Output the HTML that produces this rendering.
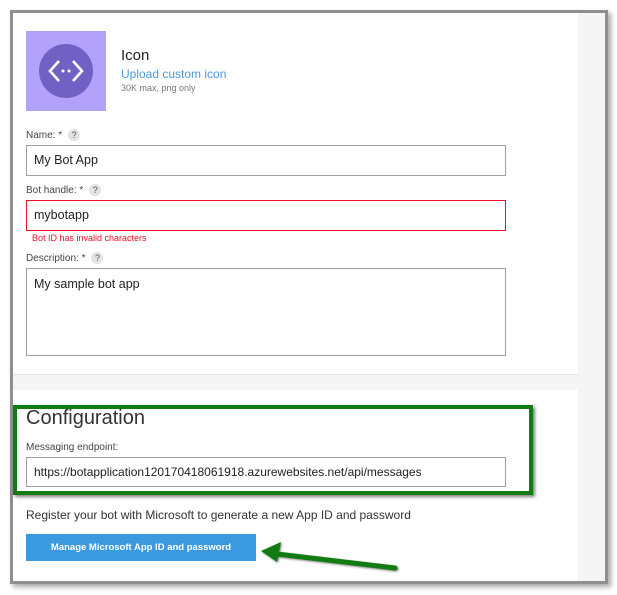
<!DOCTYPE html>
<html><head><meta charset="utf-8"><style>
*{margin:0;padding:0;box-sizing:border-box}
body{width:617px;height:595px;background:#fff;font-family:"Liberation Sans",sans-serif;position:relative;overflow:hidden}
.frame{position:absolute;left:10px;top:10px;width:598px;height:574px;border:3px solid #8f8f8f;background:#f5f5f5;box-shadow:3px 3px 5px rgba(0,0,0,.35);overflow:hidden}
.card{position:absolute;background:#fff;box-shadow:0 1px 1px rgba(0,0,0,.08)}
.abs{position:absolute;white-space:nowrap}
.lbl{font-size:10px;color:#444}
.q{display:inline-block;width:12px;height:12px;border-radius:6px;background:#e3e3e3;font-size:9px;text-align:center;line-height:12px;color:#555;margin-left:6px}
.inp{position:absolute;border:1px solid #a0a0a0;background:#fff;font-size:12.5px;color:#222;padding-left:7px}
</style></head><body>
<div class="frame">
<div class="card" style="left:0;top:0;width:565px;height:361px"></div>
<div class="card" style="left:0;top:377px;width:565px;height:200px"></div>
</div>
<div class="abs" style="left:26px;top:31px;width:80px;height:80px;background:#b3a2fc"></div>
<div class="abs" style="left:39px;top:44px;width:54px;height:54px;border-radius:50%;background:#7261c4"></div>
<svg class="abs" style="left:39px;top:44px" width="54" height="54" viewBox="0 0 54 54"><path d="M20 17 L11 27 L20 37 M34 17 L43 27 L34 37" stroke="#fff" stroke-width="2.6" fill="none"/><circle cx="24" cy="27" r="1.5" fill="#fff"/><circle cx="30" cy="27" r="1.5" fill="#fff"/></svg>
<div class="abs" style="left:121px;top:47px;font-size:15px;color:#222">Icon</div>
<div class="abs" style="left:121px;top:67px;font-size:12px;color:#4a9ae0">Upload custom icon</div>
<div class="abs" style="left:121px;top:83px;font-size:9px;color:#777">30K max, png only</div>
<div class="abs lbl" style="left:26px;top:129px">Name: *<span class="q">?</span></div>
<div class="inp" style="left:26px;top:145px;width:480px;height:31px;line-height:29px">My Bot App</div>
<div class="abs lbl" style="left:26px;top:184px">Bot handle: *<span class="q">?</span></div>
<div class="inp" style="left:26px;top:200px;width:480px;height:31px;line-height:29px;border-color:#e8112d">mybotapp</div>
<div class="abs" style="left:32px;top:233px;font-size:9px;color:#e8112d">Bot ID has invalid characters</div>
<div class="abs lbl" style="left:26px;top:252px">Description: *<span class="q">?</span></div>
<div class="inp" style="left:26px;top:268px;width:480px;height:88px;line-height:30px">My sample bot app</div>
<div class="abs" style="left:13px;top:405px;width:520px;height:90px;border:4px solid #117c11;box-shadow:2px 2px 3px rgba(0,0,0,.5)"></div>
<div class="abs" style="left:26px;top:407px;font-size:20px;color:#333">Configuration</div>
<div class="abs lbl" style="left:26px;top:442px">Messaging endpoint:</div>
<div class="inp" style="left:26px;top:457px;width:480px;height:30px;line-height:28px;font-size:12px">https://botapplication120170418061918.azurewebsites.net/api/messages</div>
<div class="abs" style="left:26px;top:508px;font-size:12px;color:#333">Register your bot with Microsoft to generate a new App ID and password</div>
<div class="abs" style="left:26px;top:534px;width:230px;height:27px;background:#3b99e0;color:#fff;font-size:9.5px;font-weight:bold;text-align:center;line-height:27px">Manage Microsoft App ID and password</div>
<svg class="abs" style="left:255px;top:538px;filter:drop-shadow(1px 1px 1px rgba(0,0,0,.5))" width="150" height="40"><path d="M140 30 L22 16" stroke="#117c11" stroke-width="5" stroke-linecap="round"/><path d="M6 13 L26 4 L22 24 Z" fill="#117c11"/></svg>
</body></html>
